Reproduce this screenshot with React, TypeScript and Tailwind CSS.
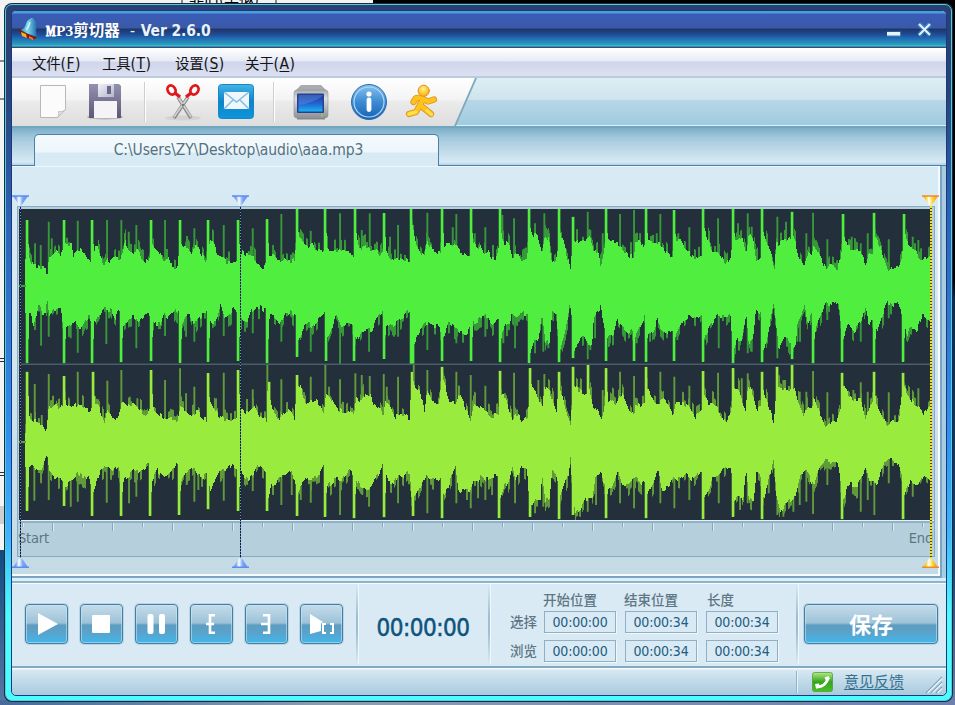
import React from "react";

/* ---------- waveform data (units: one third of a pixel) ---------- */

type Segment = { ox: number; oy: number; base: string; spikes: string };

// Spikes are "x,y" pairs; a trailing "b" marks a bold one.
const LEFT_TOP: Segment[] = [
  {
    ox: 0, oy: 540,
    base: "76,240;90,240;100,260;110,258;125,265;135,265;140,285;145,240;150,230;165,215;180,230;190,195;215,195;220,230;235,205;250,220;265,240;275,245;285,200;295,205;300,235;312,262;320,235;330,245;345,230;360,235;375,185;385,210;400,215;415,210;425,235;445,250;455,200;470,205;480,220;490,240;500,225;510,255;530,262;540,195;550,200;565,200;575,225;585,190;600,215;620,250;630,180;640,190;650,220;665,235;685,250;710,245;716,215",
    spikes: "82,120b;105,190;122,195;146,125;155,175;191,120b;233,122;277,120b;321,120;364,120;386,155;409,135;452,120b;495,120;541,120b;558,185;583,145;625,120b;671,135;714,120b",
  },
  {
    ox: 720, oy: 570,
    base: "0,185;20,195;40,200;55,225;70,230;78,215;88,190;100,195;115,220;130,205;145,215;162,212;168,145;180,145;200,175;215,160;230,185;245,185;258,165;270,190;285,185;300,178;315,185;325,180;340,210;350,150;362,180;380,170;390,180;410,180;420,195;435,170;445,195;460,210;480,205;500,210;508,210;515,100;525,150;540,185;552,200;560,155;575,180;590,190;605,180;615,165;630,165;640,160;655,180;675,195;690,200;700,155;715,180",
    spikes: "38,115;82,88b;99,165;124,72;170,55b;212,122;256,57b;300,70;346,57b;365,120;389,70;431,70b;450,140;474,105;513,55b;562,68;606,58b;638,112;649,72;692,57b;704,130",
  },
  {
    ox: 1440, oy: 570,
    base: "0,160;10,190;25,185;35,205;50,205;58,130;70,155;85,165;97,205;110,190;125,220;140,205;147,100;158,140;170,130;185,190;193,130;205,150;215,215;230,200;235,120;250,160;262,205;270,240;276,160;290,155;305,150;320,150;330,140;340,190;352,180;361,230;370,180;380,150;395,155;410,160;425,180;445,195;460,200;465,150;480,150;490,180;498,150;515,155;530,160;545,165;560,190;578,200;583,150;600,150;612,180;635,195;650,205;665,200;670,110;685,155",
    spikes: "16,112;60,57b;67,75;102,85;147,57b;165,100;193,70;205,120;236,57b;280,80b;323,65;331,120;368,130;378,57b;420,72;462,60;480,130;498,57b;530,130;541,72;583,60b;595,130;628,112;670,57b",
  },
  {
    ox: 2130, oy: 570,
    base: "5,185;15,185;25,185;45,220;60,200;68,140;80,150;95,135;107,185;115,130;128,150;138,215;150,200;156,120;170,160;185,205;192,240;197,165;210,155;230,150;245,140;255,160;265,200;280,230;290,190;303,200;310,160;325,190;348,240;360,225;380,235;392,200;398,120;410,170;430,175;450,185;465,225;475,190;490,190;495,140;510,170;533,245;545,230;562,235;575,200;582,130;595,165;615,175;625,210;645,205;665,190",
    spikes: "24,85;69,57b;84,100;113,70;125,110;157,57b;202,80;228,95;245,65b;289,130;309,68;352,148;399,72b;425,140;452,160;473,130;493,68b;536,148;581,72b;608,140;625,150",
  },
];

const LEFT_BOTTOM: Segment[] = [
  {
    ox: 0, oy: 540,
    base: "76,400;90,405;100,440;110,400;115,360;125,400;135,400;140,350;146,410;160,390;180,385;190,440;210,435;225,430;240,450;255,420;265,410;285,430;300,400;312,385;330,390;345,415;355,390;370,440;385,420;400,410;415,430;430,410;445,395;455,435;470,430;480,430;490,400;500,420;510,405;525,385;540,400;545,435;560,405;570,410;580,440;590,420;605,405;620,400;635,430;650,420;660,380;670,410;685,405;700,385;715,400",
    spikes: "80,550b;105,450;123,497;146,470;191,550b;212,475;233,518;277,550b;319,492;363,547b;409,505;452,543b;495,468;540,548b;558,470;583,485;625,545b;671,468;714,543b",
  },
  {
    ox: 720, oy: 570,
    base: "0,380;20,400;35,360;55,350;75,360;85,380;100,375;120,400;135,370;150,365;165,380;172,450;190,415;205,400;215,410;235,385;255,370;262,440;275,410;285,375;305,410;325,395;340,400;348,450;365,420;380,420;395,420;405,385;425,365;435,410;450,395;460,410;475,390;495,370;508,360;512,480;525,450;540,420;555,400;575,405;595,410;610,440;625,400;640,410;660,425;680,430;695,400;710,395",
    spikes: "15,425;38,430;82,520b;124,455;170,500b;212,485;258,513b;300,522;343,513b;387,485;431,507b;474,440;513,522b;519,522b;562,480;606,513b;649,460;692,513b",
  },
  {
    ox: 1440, oy: 570,
    base: "0,385;20,375;35,400;53,380;62,430;75,405;90,400;95,365;110,380;130,370;143,375;148,490;160,450;172,455;185,375;195,460;208,450;215,360;228,370;236,490;250,440;262,390;268,340;276,400;280,490;295,450;310,440;325,470;335,460;340,380;360,350;370,400;378,440;400,430;410,390;425,410;440,430;458,420;463,440;475,420;495,370;500,440;520,420;530,390;540,410;560,430;580,420;585,440;605,400;625,375;650,385;665,370;672,440;690,405",
    spikes: "16,440;60,517b;70,460;105,475;147,520b;165,490;190,485;205,475;236,517b;280,505b;323,508;331,480;345,445;378,513b;390,460;462,513b;470,460;498,515b;510,455;583,513b;592,450;670,515b;676,450",
  },
  {
    ox: 2130, oy: 570,
    base: "5,400;20,380;45,380;60,370;68,490;80,450;95,450;107,375;115,460;128,450;136,360;150,370;157,490;170,440;180,390;190,340;198,420;205,480;220,445;235,450;245,480;256,460;262,390;282,350;292,400;305,370;312,430;325,390;345,335;365,345;382,335;395,420;400,450;410,400;430,425;445,405;455,390;465,350;475,400;490,380;500,430;510,395;530,335;550,345;565,335;578,400;590,440;600,410;620,420;635,375;665,400",
    spikes: "26,475;69,520b;90,465;113,490;125,485;157,517b;202,505;245,508b;262,455;270,455;309,520b;352,390;397,515b;452,455;493,520b;536,385;580,515b",
  },
];

const RIGHT_TOP: Segment[] = [
  {
    ox: 0, oy: 1110,
    base: "76,180;80,140;95,150;110,155;125,160;137,180;145,110;165,100;175,120;190,95;205,105;215,115;233,100;250,115;270,120;278,100;295,110;312,155;320,120;335,140;355,145;364,90;385,105;400,105;415,120;435,140;450,120;460,115;475,130;495,150;510,145;530,155;540,110;555,120;575,135;590,120;605,140;620,150;627,90;640,110;655,140;680,150;700,145;716,140",
    spikes: "82,5b;104,42;125,135;146,12;191,18b;233,5;278,5b;322,32;364,0;389,80;412,85;452,0b;495,30;540,-5;558,70;583,50;625,10b;648,85;671,8;714,0b",
  },
  {
    ox: 720, oy: 570,
    base: "0,655;20,670;40,645;60,685;78,690;80,590;95,660;118,690;130,665;145,660;163,690;168,570;180,590;195,640;212,625;235,640;250,665;256,610;270,625;285,650;300,660;315,665;325,655;340,680;348,620;362,640;375,610;390,610;400,640;415,650;428,680;435,640;450,650;465,680;485,670;508,685;513,560;525,595;540,610;552,665;560,600;575,640;595,640;605,560;615,590;630,640;645,640;655,610;670,640;690,690;700,640;715,650",
    spikes: "38,598;82,523;86,575b;124,568;170,555b;212,560;256,523;267,590;300,568;346,550;365,555;389,558;431,552;440,590;474,560;516,545b;521,525;562,540;606,530b;649,545;692,555",
  },
  {
    ox: 1440, oy: 570,
    base: "0,655;20,670;35,680;55,670;60,620;75,620;95,685;110,670;123,695;143,680;147,580;165,600;185,655;192,590;210,610;228,670;235,580;250,640;262,680;270,700;278,580;295,600;310,610;328,600;340,655;352,650;362,690;375,640;390,625;405,640;425,610;440,645;460,680;465,640;480,650;495,640;500,590;520,630;535,640;550,630;565,645;578,680;585,640;605,640;625,650;645,680;665,660;672,620;685,645",
    spikes: "16,587;60,542b;102,548;150,535b;175,570;193,552;236,545b;280,530b;302,575;323,525b;368,600;378,535b;420,545;462,558;498,530b;541,545;583,560;628,587;670,543b",
  },
  {
    ox: 2130, oy: 570,
    base: "5,640;20,655;45,695;62,670;68,590;85,600;105,660;113,590;128,610;140,660;153,650;158,600;170,640;190,695;198,590;215,600;240,600;250,590;262,630;280,680;290,650;305,660;310,620;325,665;348,710;365,690;378,700;392,650;397,580;410,610;430,630;450,630;465,685;480,640;492,630;500,650;530,710;545,690;565,690;578,580;590,610;610,640;625,650;640,670;665,640",
    spikes: "24,548;70,535b;95,565;113,550;157,545b;202,530b;220,570;246,525b;269,605;289,605;309,543;352,607;397,548b;430,600;452,577;473,605;493,545b;536,607;580,548b;625,595",
  },
];

const RIGHT_BOTTOM: Segment[] = [
  {
    ox: 0, oy: 1110,
    base: "76,290;95,280;110,300;125,300;140,255;146,310;165,325;180,320;192,350;215,330;233,310;255,325;265,310;277,370;290,330;300,300;312,290;335,300;355,285;363,340;380,320;400,300;415,310;435,290;445,280;453,340;470,300;490,320;510,300;530,275;540,340;555,310;580,295;590,320;610,320;620,310;630,360;645,325;665,300;680,300;695,280;716,300",
    spikes: "80,422b;103,392;123,340;146,390;192,408b;212,410;233,395;275,437b;320,398;363,437b;387,400;409,380;450,437b;537,435b;560,345;583,395;595,360;606,350;625,418b;671,392;714,423b",
  },
  {
    ox: 720, oy: 570,
    base: "0,845;20,870;40,850;55,825;75,840;82,930;95,880;105,880;115,855;135,860;155,845;168,900;180,890;195,870;220,860;240,850;250,830;258,890;270,880;290,865;305,870;330,840;345,860;360,890;380,900;400,870;415,850;428,820;440,870;460,880;475,850;490,865;500,850;508,850;513,925;525,920;540,890;555,860;575,870;600,865;610,910;625,885;645,830;655,910;675,900;690,900;700,870;715,870",
    spikes: "38,903;82,963b;99,915;124,945;155,915;170,978b;182,930;212,938;256,980b;300,975;343,985b;367,915;387,950;431,982b;474,940;518,978b;562,970;606,985b;649,940;692,955;714,925",
  },
  {
    ox: 1440, oy: 570,
    base: "0,850;20,870;35,860;53,855;60,920;72,890;85,870;95,830;105,870;125,830;140,840;147,960;165,930;180,930;185,850;195,930;208,920;215,840;230,855;236,930;250,890;265,850;270,800;276,910;285,970;300,960;315,930;335,930;345,860;362,840;375,900;395,890;412,840;425,890;440,890;455,870;465,860;485,880;495,870;500,910;520,870;533,840;545,900;565,890;580,860;600,870;615,855;640,870;655,850;665,850;672,920;690,885",
    spikes: "16,930;36,915;58,985b;105,940;150,980b;165,970;190,950;207,935;236,988b;280,975b;300,980;323,965;348,945;378,985b;420,940;462,955;498,985b;541,940;583,955;628,930;670,988b",
  },
  {
    ox: 2130, oy: 570,
    base: "5,860;22,860;45,830;62,840;69,940;85,920;98,925;107,845;115,920;130,930;138,850;153,860;158,930;170,890;190,810;198,920;210,970;225,940;240,930;255,920;270,860;285,835;300,870;310,890;325,840;345,810;360,820;380,810;392,880;397,940;415,880;440,890;455,860;467,835;480,880;500,880;520,820;535,810;560,815;575,860;580,920;600,870;620,890;640,850;665,870",
    spikes: "26,940;69,980b;90,960;113,940;125,935;157,988b;176,910;202,975;220,980;250,965;269,945;289,935;309,972;352,885;395,988b;452,965;473,930;493,975;536,880;578,988b;608,920",
  },
];

const WAVE_X = 19;
const WAVE_Y = 209;
const FIRST = 25;
const LAST = 931;

function noise(i: number, seed: number) {
  const v = Math.sin(i * 127.1 + seed * 311.7) * 43758.5453;
  return v - Math.floor(v);
}

/** Turns the segments into one path for the solid body and one for the thin, dim columns. */
function buildPaths(segments: Segment[], center: number, dir: 1 | -1, seed: number) {
  const points: [number, number][] = [];
  const spikes: [number, number, boolean][] = [];
  for (const s of segments) {
    for (const p of s.base.split(";")) {
      const [x, y] = p.split(",").map(Number);
      points.push([(x + s.ox) / 3, (y + s.oy) / 3]);
    }
    for (const p of s.spikes.split(";")) {
      const bold = p.endsWith("b");
      const [x, y] = p.replace("b", "").split(",").map(Number);
      spikes.push([(x + s.ox) / 3 - 1, (y + s.oy) / 3, bold]);
    }
  }
  let solid = "";
  let dim = "";
  const column = (x: number, y: number, w: number) => {
    const c = center - WAVE_Y;
    return `M${(x - WAVE_X).toFixed(1)} ${c}V${(y - WAVE_Y).toFixed(1)}h${w}V${c}z`;
  };
  let k = 0;
  for (let x = FIRST; x <= LAST; x++) {
    while (k < points.length - 2 && points[k + 1][0] <= x) k++;
    const [x0, y0] = points[k];
    const [x1, y1] = points[k + 1];
    const t = Math.max(0, Math.min(1, (x - x0) / (x1 - x0 || 1)));
    const step = Math.floor(x / 2);
    const edge = y0 + (y1 - y0) * t + (noise(step, seed) - 0.5) * 5;
    solid += column(x, edge, 1);
    const r = noise(step, seed + 5);
    if (r > 0.6) dim += column(x, edge + dir * (r - 0.45) * 22, 1);
  }
  for (const [x, y, bold] of spikes) {
    if (bold) {
      solid += column(Math.round(x), y, 2);
      dim += column(Math.round(x) - 0.5, y, 3.2);
      solid += column(Math.round(x) + 2, y - dir * 24, 1);
    } else {
      dim += column(x + 0.1, y, 1.9);
    }
  }
  return { solid, dim };
}

const CHANNELS = [
  {
    solidClass: "fill-[#50ee3e]",
    dimClass: "fill-[#37983a]",
    parts: [buildPaths(LEFT_TOP, 286, -1, 1), buildPaths(LEFT_BOTTOM, 286, 1, 2)],
  },
  {
    solidClass: "fill-[#99ec3d]",
    dimClass: "fill-[#619a3b]",
    parts: [buildPaths(RIGHT_TOP, 442, -1, 3), buildPaths(RIGHT_BOTTOM, 442, 1, 4)],
  },
];

function Waveform() {
  return (
    <svg width="913" height="311" viewBox="0 0 913 311" className="block bg-[#232f3a]">
      {CHANNELS.map((c) =>
        c.parts.map((p, i) => (
          <g key={c.solidClass + i}>
            <path d={p.dim} className={c.dimClass} />
            <path d={p.solid} className={c.solidClass} shapeRendering="crispEdges" />
          </g>
        )),
      )}
      <rect x="0" y="76" width="7" height="2" className="fill-[#3aa338]" />
      <rect x="0" y="232" width="7" height="2" className="fill-[#65a23a]" />
      <rect x="0" y="154.500" width="913" height="1.500" className="fill-[#4a5d6a]" />
    </svg>
  );
}

/* ---------- window parts ---------- */

const SANS = "font-['DejaVu_Sans_Condensed','DejaVu_Sans','Noto_Sans_CJK_SC',sans-serif]";

function TitleBar() {
  return (
    <div className="flex h-[37px] shrink-0 items-center border-b border-[#3c4878] bg-[linear-gradient(180deg,#4e9ddb_0,#4e9ddb_2px,#3a5cb8_3px,#3a5aa8_17px,#1f3568_18px,#1f4a90_23px,#2268b4_27px,#2aa0bc_34px,#40d0d8_35px,#1c5080_36px)] pl-[6px]">
      <svg width="24" height="24" viewBox="0 0 24 24" className="-mt-px">
        <defs>
          <linearGradient id="bell" x1="0" y1="0" x2="1" y2="0">
            <stop offset="0" stopColor="#2f87bc" />
            <stop offset=".45" stopColor="#7fd8ec" />
            <stop offset="1" stopColor="#1a68a8" />
          </linearGradient>
        </defs>
        <path d="M12 2c1-2 5-1 4 1 4 2 3 7 2 11l1 6C14 18 7 16 2 13c4-1 5-3 6-6 1-3 2-4 4-5z" fill="url(#bell)" />
        <path d="M1 12c0 5 9 11 16 10l2-2C13 19 7 16 1 12z" fill="#8e1409" />
        <path d="M3 15l5 2 1 4-5-2z" fill="#f8b219" />
        <path d="M11 19l4 2v2l-4-2z" fill="#ff7b12" />
        <path d="M12 5c-1 4-2 6-4 8" stroke="#c8f4fa" strokeWidth="1.600" fill="none" />
      </svg>
      <span className="ml-[4px] mt-[3px] flex w-[83px] items-baseline whitespace-nowrap font-['Liberation_Serif','Noto_Sans_CJK_SC',serif] text-[15.5px] font-bold leading-[20px] text-white">
        <span className="inline-block w-[10px] origin-left scale-x-[0.66] [-webkit-text-stroke:1px_#fff]">M</span>P3剪切器
      </span>
      <span className={`ml-[1px] mt-[3px] whitespace-pre text-[15.500px] font-bold leading-[20px] tracking-[-0.1px] text-[#e9f3fb] ${SANS}`}>
        <span className="mr-px font-normal">-</span> Ver 2.6.0
      </span>
      <svg width="48" height="20" viewBox="0 0 48 20" className="ml-auto mr-[12px] mt-[2px]">
        <path d="M1 14h14" stroke="#45b4f0" strokeWidth="5" opacity=".5" />
        <rect x="1" y="12" width="13" height="3.500" fill="#e4f4fc" />
        <path d="M33 4l11 11M44 4l-11 11" stroke="#45b4f0" strokeWidth="5" opacity=".4" />
        <path d="M33 4l11 11M44 4l-11 11" stroke="#e4f4fc" strokeWidth="2" />
      </svg>
    </div>
  );
}

function MenuItem({ label, hot, className }: { label: string; hot: string; className: string }) {
  return (
    <span className={`flex items-baseline ${className}`}>
      {label}
      <span className="text-[15.500px] tracking-[0.400px]">
        (<span className="underline underline-offset-2">{hot}</span>)
      </span>
    </span>
  );
}

function MenuBar() {
  return (
    <div className={`flex h-[30px] shrink-0 items-center border-b-2 border-[#bccadd] bg-[linear-gradient(180deg,#fff_0,#e6eaf5_13px,#cfd5ea_14px,#dce0f2_28px)] pl-[20px] pt-[3px] text-[14.500px] leading-[20px] tracking-[-0.200px] text-[#141414] ${SANS}`}>
      <MenuItem label="文件" hot="F" className="w-[70px]" />
      <MenuItem label="工具" hot="T" className="w-[73px]" />
      <MenuItem label="设置" hot="S" className="w-[70px]" />
      <MenuItem label="关于" hot="A" className="w-[70px]" />
    </div>
  );
}

function Divider() {
  return <span className="h-[40px] w-[2px] bg-[linear-gradient(90deg,#cfcfcf_50%,#fff_50%)]" />;
}

function Runner() {
  const limbs = (
    <>
      <path d="M18 15l-3 6 11 9" />
      <path d="M15 21l-4 7-7 2" />
      <path d="M18 15l5 2.500 6-2" />
      <path d="M17 13.500l-6 .5-2.500 4" />
    </>
  );
  return (
    <svg width="34" height="36" viewBox="0 0 34 36" fill="none" strokeLinecap="round" strokeLinejoin="round" className="ml-[17px]">
      <defs>
        <radialGradient id="head" cx=".45" cy=".35" r=".6">
          <stop offset="0" stopColor="#fff28a" />
          <stop offset="1" stopColor="#ffb010" />
        </radialGradient>
      </defs>
      <g stroke="#dc9226" strokeWidth="6.200">{limbs}</g>
      <g stroke="#ffc31c" strokeWidth="4.600">{limbs}</g>
      <path d="M4 30l7-2M22 26.500l4.500 4" stroke="#ffe24a" strokeWidth="3" />
      <circle cx="18.700" cy="6.800" r="5.600" fill="url(#head)" stroke="#dc9226" />
    </svg>
  );
}

function Toolbar() {
  return (
    <div className="flex h-[50px] shrink-0 border-b-2 border-[#72a6c0] bg-[linear-gradient(180deg,#dceff4_0,#cfe3ee_22px,#b8d7e7_22px,#a0cbdf_47px,#dff1f8_47px)]">
      <div className="h-[48px] w-[465px] bg-[#80a9bd] [clip-path:polygon(0_0,100%_0,444px_100%,0_100%)]">
        <div className="flex h-[48px] w-[464px] items-center bg-[linear-gradient(180deg,#fff_0,#f3f3f3_22px,#ebebeb_23px,#dedede_47px)] [clip-path:polygon(0_0,463px_0,442px_100%,0_100%)]">
          <svg width="28" height="35" viewBox="0 0 28 35" className="-mt-px ml-[27px]">
            <path d="M1.500 1.500h25v24l-8 8h-17z" fill="#fbfbfb" stroke="#b8b8b8" />
            <path d="M18.500 33.500c1.500-2 1.500-4 1-6 2 .5 5 0 7-2z" fill="#e3e3e3" stroke="#b8b8b8" strokeWidth=".8" />
          </svg>
          <svg width="38" height="37" viewBox="0 0 38 37" className="-mt-px ml-[19px]">
            <defs>
              <linearGradient id="disk" x1="0" y1="0" x2="0" y2="1">
                <stop offset="0" stopColor="#9390b0" />
                <stop offset="1" stopColor="#5d5878" />
              </linearGradient>
              <linearGradient id="shutter" x1="0" y1="0" x2="1" y2="1">
                <stop offset="0" stopColor="#f0f0f8" />
                <stop offset="1" stopColor="#b4b6cc" />
              </linearGradient>
            </defs>
            <ellipse cx="19" cy="34" rx="18" ry="2.500" fill="#b5b5b5" />
            <path d="M3 1h30l2 2v32H3z" fill="url(#disk)" />
            <path d="M12 1h16v13H12z" fill="url(#shutter)" />
            <path d="M21 3h4v8h-4z" fill="#6a6888" />
            <path d="M8 18h23v17H8z" fill="#f4f4f6" />
          </svg>
          <span className="ml-[20px] flex"><Divider /></span>
          <svg width="38" height="38" viewBox="0 0 38 38" className="ml-[18px]">
            <ellipse cx="19" cy="35" rx="18" ry="2.500" fill="#d2d2d2" />
            <path d="M14 14l13 21M24 14L10 35" stroke="#8a8a8a" strokeWidth="3.600" />
            <path d="M14 14l13 20M24 14L10 34" stroke="#cfcfcf" strokeWidth="1.800" />
            <ellipse cx="7.500" cy="7" rx="3.800" ry="4.800" transform="rotate(-30 7.500 7)" fill="none" stroke="#e0181c" strokeWidth="2.800" />
            <ellipse cx="30.500" cy="7" rx="3.800" ry="4.800" transform="rotate(30 30.500 7)" fill="none" stroke="#e0181c" strokeWidth="2.800" />
            <path d="M11 10l5 4M27 10l-5 4" stroke="#e0181c" strokeWidth="3.400" />
            <circle cx="19" cy="22" r="1.300" fill="#777" />
          </svg>
          <svg width="36" height="35" viewBox="0 0 36 35" className="-mt-px ml-[16px]">
            <defs>
              <linearGradient id="mail" x1="0" y1="0" x2="0" y2="1">
                <stop offset="0" stopColor="#45b4e4" />
                <stop offset=".5" stopColor="#0c84cc" />
                <stop offset="1" stopColor="#0e96da" />
              </linearGradient>
            </defs>
            <rect x=".5" y=".5" width="35" height="34" rx="3" fill="url(#mail)" stroke="#1888c4" />
            <rect x="6" y="8" width="25" height="17" fill="#f0f6fa" />
            <path d="M6 8l12.500 10L31 8M6 25l9-9M31 25l-9-9" fill="none" stroke="#7bc0e4" strokeWidth="1.500" />
          </svg>
          <span className="ml-[19px] flex"><Divider /></span>
          <svg width="36" height="36" viewBox="0 0 36 36" className="-mt-px ml-[18px]">
            <defs>
              <linearGradient id="case" x1="0" y1="0" x2="0" y2="1">
                <stop offset="0" stopColor="#a8aaaf" />
                <stop offset=".3" stopColor="#dcdde0" />
                <stop offset="1" stopColor="#8d9096" />
              </linearGradient>
              <linearGradient id="screen" x1="0" y1="0" x2="0" y2="1">
                <stop offset="0" stopColor="#1b3b9c" />
                <stop offset=".5" stopColor="#2460d0" />
                <stop offset="1" stopColor="#19b4f2" />
              </linearGradient>
            </defs>
            <path d="M8 1h20l6 6H2z" fill="#a9abb1" />
            <rect x="1" y="6" width="34" height="28" rx="3" fill="url(#case)" stroke="#92959a" strokeWidth=".6" />
            <path d="M4 34h28v1.500H4z" fill="#85888c" />
            <rect x="4" y="9.500" width="27" height="19.500" rx="1" fill="#23418e" />
            <rect x="5.500" y="11" width="24" height="16.500" fill="url(#screen)" />
            <path d="M5.500 21c8-1 18-4 24-9V11h-24z" fill="#6f95e0" opacity=".4" />
            <rect x="28" y="30.500" width="2" height="2" fill="#8ed02c" />
          </svg>
          <svg width="38" height="38" viewBox="0 0 38 38" className="ml-[21px]">
            <defs>
              <linearGradient id="info" x1="0" y1="0" x2="0" y2="1">
                <stop offset="0" stopColor="#86c4ee" />
                <stop offset=".5" stopColor="#3d8bd4" />
                <stop offset="1" stopColor="#1560b4" />
              </linearGradient>
            </defs>
            <circle cx="19" cy="19" r="17.500" fill="url(#info)" stroke="#2c6cae" />
            <circle cx="19" cy="19" r="15" fill="none" stroke="#b4d8f2" strokeWidth="1.200" />
            <circle cx="19" cy="11" r="2.600" fill="#fff" />
            <path d="M19 17V26.500" stroke="#fff" strokeWidth="4.800" strokeLinecap="round" />
          </svg>
          <Runner />
        </div>
      </div>
    </div>
  );
}

function TabStrip() {
  return (
    <div className="flex h-[38px] shrink-0 items-end bg-[linear-gradient(180deg,#7cadc8_0,#a3c9dd_10px,#d8eaf4_34px,#a9c9dc_38px)]">
      <div className="h-full w-[22px] border-b border-[#4d80a8]" />
      <div className={`flex h-[32px] w-[405px] items-center justify-center rounded-t-[5px] border border-b-0 border-[#4d80a8] bg-[linear-gradient(180deg,#f4fafd_0,#ecf6fb_17px,#d8ebf5_18px)] pl-[4px] text-[15.500px] tracking-[-0.090px] text-[#55707f] ${SANS}`}>
        <span className="whitespace-nowrap">C:\Users\ZY\Desktop\audio\aaa.mp3</span>
      </div>
      <div className="h-full flex-1 border-b border-[#4d80a8]" />
    </div>
  );
}

function Marker({ left, gold, id }: { left: string; gold?: boolean; id: string }) {
  const edge = gold ? "#f08a28" : "#5c8ef2";
  const mid = gold ? "#ffd428" : "#7aa4f8";
  return (
    <div className={`absolute top-[29px] flex w-[17px] flex-col items-center ${left}`}>
      <svg width="17" height="11" viewBox="0 0 17 11">
        <defs>
          <linearGradient id={id} x1="0" y1="0" x2="1" y2="0">
            <stop offset="0" stopColor={edge} />
            <stop offset=".2" stopColor={mid} />
            <stop offset=".4" stopColor="#fff" />
            <stop offset=".65" stopColor={mid} />
            <stop offset="1" stopColor={edge} />
          </linearGradient>
        </defs>
        <path d="M1 1h15l-6.500 9.500h-2z" fill={`url(#${id})`} />
        <path d="M0 1h17" stroke={edge} strokeWidth="1.600" />
      </svg>
      <span
        className={
          gold
            ? "h-[352px] w-[2px] bg-[repeating-linear-gradient(180deg,#f2e21c_0,#f2e21c_2px,#4b4708_2px,#4b4708_3px)]"
            : "h-[352px] w-px bg-[repeating-linear-gradient(180deg,#5f8fe8_0,#5f8fe8_1px,#151e2a_1px,#151e2a_3px)]"
        }
      />
      <svg width="17" height="10" viewBox="0 0 17 10">
        <path d="M1 9.500l6-9h3l6 9z" fill={`url(#${id})`} />
        <path d="M0 9.200h17" stroke={edge} strokeWidth="1.600" />
      </svg>
    </div>
  );
}

function Ruler() {
  return (
    <div className="h-[35px] border-t-2 border-[#8fb1c8] bg-[#b5cfdd]">
      <div className="flex h-[8px] overflow-hidden pl-[3px]">
        {Array.from({ length: 31 }, (_, i) => (
          <span
            key={i}
            className={`w-[30px] shrink-0 border-l border-[#86a8bf] shadow-[inset_1px_0_#dcebf3] ${i % 2 ? "h-[8px]" : "h-[4px]"}`}
          />
        ))}
      </div>
      <div className={`-mt-[2px] flex justify-between text-[14.500px] leading-[18px] tracking-[-0.200px] text-[#5e7582] ${SANS}`}>
        <span className="-ml-px">Start</span>
        <span className="mr-px">End</span>
      </div>
    </div>
  );
}

function WavePanel() {
  return (
    <div className="relative mr-[4px] h-[412px] shrink-0 border-b-2 border-r-2 border-[#7ba3c4] bg-[linear-gradient(180deg,#d8ebf5_0,#d6e9f3_120px,#c4dbe6_400px)] shadow-[inset_-2px_-2px_#f5fbfe,inset_0_1px_#f0f8fc]">
      <div className="h-[40px]" />
      <div className="ml-[5px] w-[918px] border border-[#88abc4] bg-[#b5cfdd] pl-px pt-[2px]">
        <Waveform />
        <div className="h-px bg-[#e6f1f6]" />
        <Ruler />
      </div>
      <Marker left="left-0" id="mk-a" />
      <Marker left="left-[220px]" id="mk-b" />
      <Marker left="left-[910px]" id="mk-c" gold />
    </div>
  );
}

const GLOSS =
  "rounded-[4px] border border-[#457e9f] bg-[linear-gradient(180deg,#c4dcea_0,#9dc2d8_18px,#5d9dc3_20px,#5ba2c9_27px,#45b3e6_36px)] shadow-[inset_0_0_0_1px_rgba(205,232,245,0.55),0_0_0_1px_rgba(170,205,222,0.7)]";

function GlossButton({ children }: { children: React.ReactNode }) {
  return <button className={`flex h-[40px] w-[43px] items-center justify-center ${GLOSS}`}>{children}</button>;
}

function Transport() {
  return (
    <div className="flex gap-[12px] pl-[13px] pt-[21px]">
      <GlossButton>
        <svg width="41" height="38" viewBox="0 0 41 38" fill="#fff"><path d="M12 8l20 11-20 11z" /></svg>
      </GlossButton>
      <GlossButton>
        <svg width="41" height="38" viewBox="0 0 41 38" fill="#fff"><rect x="11" y="10" width="18" height="18" rx="1" /></svg>
      </GlossButton>
      <GlossButton>
        <svg width="41" height="38" viewBox="0 0 41 38" fill="#fff">
          <rect x="11.500" y="9" width="6" height="20" rx="2" /><rect x="23" y="9" width="6" height="20" rx="2" />
        </svg>
      </GlossButton>
      <GlossButton>
        <svg width="41" height="38" viewBox="0 0 41 38" fill="none" stroke="#fff" strokeWidth="2.600">
          <path d="M24 10.300h-5v17.400h5M15 19h8" />
        </svg>
      </GlossButton>
      <GlossButton>
        <svg width="41" height="38" viewBox="0 0 41 38" fill="none" stroke="#fff" strokeWidth="2.600">
          <path d="M17 10.300h6v17.400h-6M15 19h8" />
        </svg>
      </GlossButton>
      <GlossButton>
        <svg width="41" height="38" viewBox="0 0 41 38" fill="none" stroke="#fff" strokeWidth="2">
          <path d="M9 9l13 8-2 1v8l-11 3z" fill="#fff" stroke="none" />
          <path d="M25 19h-3v9h3M29 19h3v9h-3" />
        </svg>
      </GlossButton>
    </div>
  );
}

function VLine() {
  return (
    <span className="mt-px h-[80px] w-[2px] shrink-0 bg-[linear-gradient(180deg,#d9eaf4_0,#9dbfd2_40%,#9dbfd2_60%,#d9eaf4_100%)] shadow-[1px_0_#eef7fb]" />
  );
}

function TimeField({ value }: { value: string }) {
  return (
    <span className={`flex h-[22px] w-[72px] items-center justify-center border border-[#8db0c4] text-[14px] tracking-[-0.200px] text-[#235c80] shadow-[1px_1px_#f0f8fc] ${SANS}`}>
      {value}
    </span>
  );
}

const CJK = "font-['Noto_Sans_CJK_SC',sans-serif]";

function Times() {
  return (
    <div className={`grid shrink-0 grid-cols-[27px_72px_72px_72px] gap-x-[9px] pt-[9px] text-[13.500px] font-medium text-[#5f7784] ${CJK}`}>
      <span />
      <span className="-ml-[3px] h-[19px] leading-[15px]">开始位置</span>
      <span className="-ml-[3px] h-[19px] leading-[15px]">结束位置</span>
      <span className="-ml-px h-[19px] leading-[15px]">长度</span>
      <span className="h-[29px] leading-[21px]">选择</span>
      <span className="-ml-[2px]"><TimeField value="00:00:00" /></span>
      <span className="-ml-[2px]"><TimeField value="00:00:34" /></span>
      <span className="-ml-[2px]"><TimeField value="00:00:34" /></span>
      <span className="leading-[21px]">浏览</span>
      <span className="-ml-[2px]"><TimeField value="00:00:00" /></span>
      <span className="-ml-[2px]"><TimeField value="00:00:34" /></span>
      <span className="-ml-[2px]"><TimeField value="00:00:34" /></span>
    </div>
  );
}

function Controls() {
  return (
    <div className="flex h-[90px] shrink-0 border-b-2 border-[#84a9c0] bg-[#d9eaf4]">
      <div className="flex h-full w-full flex-col">
        <div className="h-[5px] shrink-0 border-b-2 border-[#8fb3cb] bg-[#dceef6]" />
        <div className="flex shadow-[inset_0_1px_#f7fcfe]">
          <div className="w-[344px] shrink-0"><Transport /></div>
          <VLine />
          <div className={`flex w-[130px] shrink-0 items-center justify-center pt-[9px] text-[24px] tracking-[-0.500px] text-[#10547c] ${SANS}`}>
            <span className="[-webkit-text-stroke:0.5px_#10547c]">00:00:00</span>
          </div>
          <VLine />
          <div className="w-[306px] shrink-0 pl-[20px]"><Times /></div>
          <VLine />
          <div className="pl-[6px] pt-[21px]">
            <button className={`flex h-[40px] w-[134px] items-center justify-center pb-px text-[22px] font-bold text-white ${GLOSS} ${CJK}`}>
              保存
            </button>
          </div>
        </div>
      </div>
    </div>
  );
}

function StatusBar() {
  return (
    <div className="flex flex-1 items-center justify-end rounded-b-[4px] bg-[linear-gradient(180deg,#f4fafd_0,#f4fafd_1px,#d6e8f3_2px,#a9cadd_100%)]">
      <span className="h-[22px] w-[2px] bg-[linear-gradient(90deg,#8fb3c8_50%,#e5f2f8_50%)]" />
      <svg width="21" height="20" viewBox="0 0 21 20" className="ml-[14px] mt-px">
        <defs>
          <linearGradient id="phone" x1="0" y1="0" x2="0" y2="1">
            <stop offset="0" stopColor="#b4e886" />
            <stop offset=".5" stopColor="#35a41c" />
            <stop offset="1" stopColor="#48c023" />
          </linearGradient>
        </defs>
        <rect x=".5" y=".5" width="20" height="19" rx="2" fill="url(#phone)" stroke="#4da03a" strokeWidth=".8" />
        <path d="M4 15c7 0 11-4 12-9" fill="none" stroke="#fff" strokeWidth="3" />
        <path d="M12.500 5.500l4-1.500 1.500 3-4 1.500zM3 12l4-.5.500 4-3.500 1z" fill="#fff" />
      </svg>
      <span className={`ml-[11px] text-[15px] text-[#37708f] underline underline-offset-2 ${CJK}`}>意见反馈</span>
      <svg width="20" height="20" viewBox="0 0 20 20" className="ml-[20px] mr-[2px] self-end">
        <path d="M2 18L18 2M7 18L18 7M12 18l6-6" stroke="#7ba0b5" strokeWidth="1.200" />
        <path d="M3.500 18L18 3.500M8.500 18L18 8.500M13.500 18l4.500-4.500" stroke="#e6f3f9" strokeWidth="1.200" />
      </svg>
    </div>
  );
}

export default function App() {
  return (
    <div className="relative h-[705px] w-[955px] overflow-hidden bg-[linear-gradient(180deg,#000_0,#000_280px,#0c2a4c_300px,#16406e_560px,#6e7fa4_705px)]">
      {/* desktop and the window that lies behind */}
      <div className="absolute left-0 top-0 h-[550px] w-[8px] bg-[#f4f4f4]">
        <div className="mt-[60px] h-[40px] border-y-2 border-[#8a8a8a]" />
        <div className="mt-[258px] h-[4px] border-y border-[#2c2c44]" />
        <div className="mt-[110px] h-[4px] border-y border-[#2c2c44]" />
        <div className="mt-[30px] h-[18px] bg-[#cfcfcf]" />
      </div>
      <div className="absolute left-0 top-0 h-[5px] w-[373px] overflow-hidden bg-[#f2f2f2]">
        <div className="ml-[181px] h-[5px] w-[96px] border-x-2 border-[#888] pl-[6px]">
          <span className={`block whitespace-nowrap text-[15px] leading-[14px] text-black [transform:translateY(-9px)] ${CJK}`}>非旧(单拟)</span>
        </div>
      </div>
      <div className="absolute left-0 top-[550px] h-[155px] w-[8px] bg-[linear-gradient(180deg,#114a80,#5a76a4)]" />
      <div className="absolute left-0 top-[700px] h-[5px] w-full bg-[linear-gradient(90deg,#48699c,#8c9fb0_35%,#7c8fb0_65%,#6d7fae)]" />

      {/* application window */}
      <div className="relative ml-[4px] mt-[3px] h-[699px] w-[949px] rounded-[8px] bg-[#0b3048] p-px">
        <div className="flex h-full w-full rounded-[7px] border border-[#58cbd8] bg-[linear-gradient(180deg,#2c3f72_0,#2a4274_80px,#2f62b8_220px,#2f90f0_430px,#3fb4ff_530px,#4dfcff_610px)] pb-[4px] pl-[5px] pr-[4px] pt-[5px]">
          <div className="flex w-full flex-col overflow-hidden rounded-[5px] border border-[#153a80] bg-[#a9cde0]">
            <TitleBar />
            <MenuBar />
            <Toolbar />
            <TabStrip />
            <WavePanel />
            <Controls />
            <StatusBar />
          </div>
        </div>
      </div>
    </div>
  );
}
